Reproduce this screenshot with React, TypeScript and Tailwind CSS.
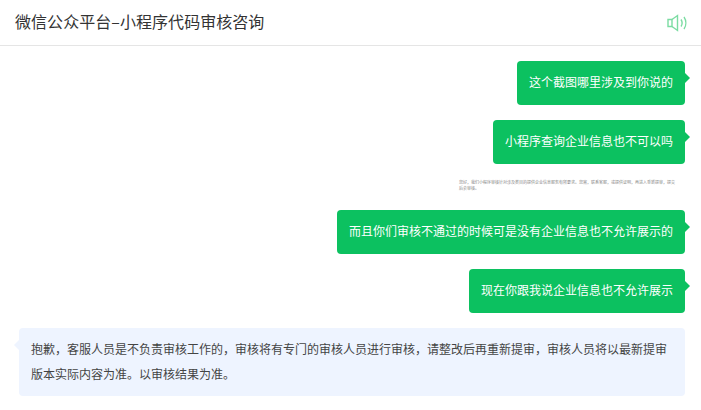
export default function App() {
  const font = { fontFamily: '"Noto Sans CJK SC", "Liberation Sans", sans-serif' };
  const Mine = ({ children }: { children: string }) => (
    <div className="relative self-end rounded-[4px] bg-[#0cc160] px-3 pb-[13px] pt-[11px] text-[12px] leading-[20px] text-white">
      {children}
      <span className="absolute right-[-5px] top-[12px] h-0 w-0 border-y-[5px] border-l-[5px] border-y-transparent border-l-[#0cc160]" />
    </div>
  );
  return (
    <div style={font} className="flex h-[410px] w-[701px] flex-col overflow-hidden bg-white">
      <header className="flex h-[46px] shrink-0 items-center justify-between border-b border-[#e5e5e5] pl-[15px] pr-[13px]">
        <h1 className="mb-[4px] text-[16px] font-normal leading-[24px] tracking-[0.05px] text-[#333]">微信公众平台–小程序代码审核咨询</h1>
        <svg width="21" height="18" viewBox="0 0 21 18" fill="none" stroke="#7bdca2" strokeWidth="1.4">
          <path d="M1 5.500h4v7H1z" />
          <path d="M5 5.500 10.500 1.500v15L5 12.500" />
          <path d="M14 5.500c1.300 2 1.300 5 0 7" />
          <path d="M17 3c2.400 3.500 2.400 8.500 0 12" />
        </svg>
      </header>
      <main className="flex flex-col pl-[19px] pr-4 pt-[15px]">
        <Mine>这个截图哪里涉及到你说的</Mine>
        <div className="h-[15px]" />
        <Mine>小程序查询企业信息也不可以吗</Mine>
        <p className="mb-[19px] ml-[440px] mt-[15px] w-[218px] text-[4px] leading-[6px] text-[#888]">
          您好，我们小程序审核针对涉及类目的提供企业信息服务有所要求。您需，联系客服，或提供证明，再进入重新提审，提交后会审核。
        </p>
        <Mine>而且你们审核不通过的时候可是没有企业信息也不允许展示的</Mine>
        <div className="h-[15px]" />
        <Mine>现在你跟我说企业信息也不允许展示</Mine>
        <div className="relative mt-[15px] rounded-[4px] bg-[#eef4ff] px-3 pb-[10px] pt-[8px] text-[12px] leading-[25px] text-[#444]">
          <span className="absolute left-[-5px] top-[12px] h-0 w-0 border-y-[5px] border-r-[5px] border-y-transparent border-r-[#eef4ff]" />
          抱歉，客服人员是不负责审核工作的，审核将有专门的审核人员进行审核，请整改后再重新提审，审核人员将以最新提审版本实际内容为准。以审核结果为准。
        </div>
      </main>
    </div>
  );
}
